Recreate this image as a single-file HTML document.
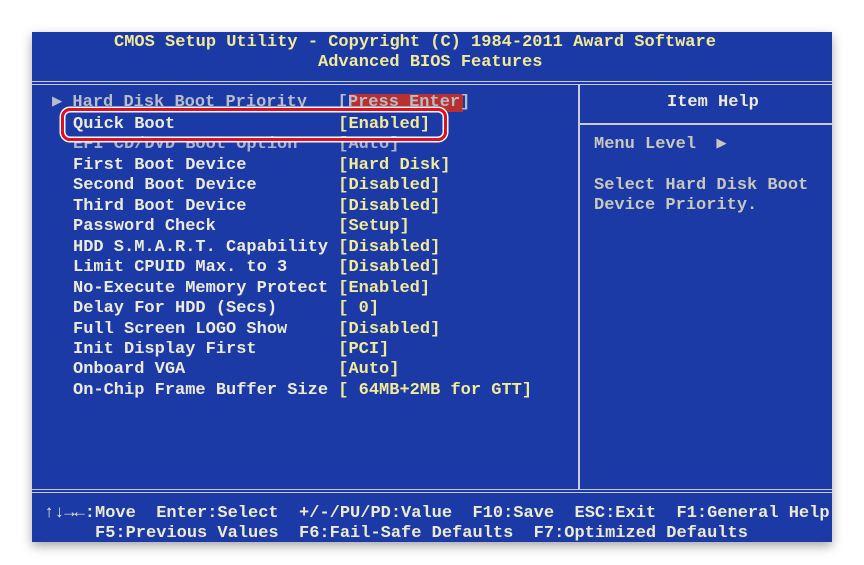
<!DOCTYPE html>
<html><head><style>
body{margin:0;width:864px;height:565px;background:#fff;position:relative;overflow:hidden}
#s{position:absolute;left:32px;top:32px;width:800px;height:510px;background:#1c3aa6;box-shadow:0 4px 10px rgba(0,0,0,.35)}
.t{position:absolute;font-family:"Liberation Mono",monospace;font-weight:bold;font-size:17px;line-height:20.46px;white-space:pre;color:#ecead8}
.y{color:#f2ea98}
.h{position:absolute;height:1px;background:#c8ccd8}
.v{position:absolute;width:2px;background:#c8ccd8}
.f{position:absolute;font-family:"Liberation Mono",monospace;font-weight:bold;font-size:17px;white-space:pre;color:#ecead0;transform-origin:0 0}
</style></head><body>
<div id="s"></div>
<div class="t y" style="left:114px;top:33px">CMOS Setup Utility - Copyright (C) 1984-2011 Award Software</div>
<div class="t y" style="left:318px;top:53px">Advanced BIOS Features</div>
<div class="h" style="left:32px;top:81px;width:800px"></div>
<div class="h" style="left:32px;top:84px;width:800px"></div>
<div class="h" style="left:32px;top:489px;width:800px"></div>
<div class="h" style="left:32px;top:492px;width:800px"></div>
<div class="v" style="left:578px;top:85px;height:404px"></div>
<div class="h" style="left:580px;top:123px;width:252px;height:2px"></div>
<div style="position:absolute;left:349px;top:94px;width:114px;height:18px;background:#b83030"></div>
<div class="t" style="left:52px;top:93px;color:#b8bcc8">▶ Hard Disk Boot Priority   [Press Enter]</div>
<div class="t" style="left:73px;top:135px;color:#aeb4c8">EFI CD/DVD Boot Option    [Auto]</div>
<div class="t" style="left:73px;top:115px">Quick Boot                <span class="y">[Enabled]</span>
<span style="visibility:hidden">x</span>
First Boot Device         <span class="y">[Hard Disk]</span>
Second Boot Device        <span class="y">[Disabled]</span>
Third Boot Device         <span class="y">[Disabled]</span>
Password Check            <span class="y">[Setup]</span>
HDD S.M.A.R.T. Capability <span class="y">[Disabled]</span>
Limit CPUID Max. to 3     <span class="y">[Disabled]</span>
No-Execute Memory Protect <span class="y">[Enabled]</span>
Delay For HDD (Secs)      <span class="y">[ 0]</span>
Full Screen LOGO Show     <span class="y">[Disabled]</span>
Init Display First        <span class="y">[PCI]</span>
Onboard VGA               <span class="y">[Auto]</span>
On-Chip Frame Buffer Size <span class="y">[ 64MB+2MB for GTT]</span></div>
<div style="position:absolute;left:61px;top:108px;width:380px;height:27px;border:3px solid #e01020;border-radius:9px;box-shadow:0 0 0 1.5px #fff,inset 0 0 0 1.5px #fff"></div>
<div class="t" style="left:667px;top:93px">Item Help</div>
<div class="t" style="left:594px;top:135px;color:#c8c8bc">Menu Level  ▶</div>
<div class="t" style="left:594px;top:176px;color:#c8c8bc">Select Hard Disk Boot
Device Priority.</div>
<div class="f" style="left:44px;top:504px">↑↓→←:Move  Enter:Select  +/-/PU/PD:Value  F10:Save  ESC:Exit  F1:General Help</div>
<div class="f" style="left:95px;top:524px">F5:Previous Values  F6:Fail-Safe Defaults  F7:Optimized Defaults</div>
</body></html>
